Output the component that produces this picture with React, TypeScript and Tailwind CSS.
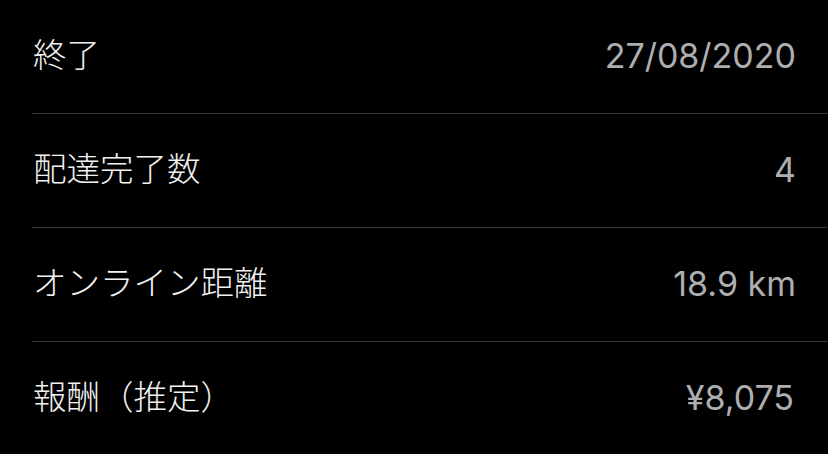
import React from "react";

const rows = [
  { label: "終了", value: "27/08/2020" },
  { label: "配達完了数", value: "4" },
  { label: "オンライン距離", value: "18.9 km" },
  { label: "報酬（推定）", value: "¥8,075" },
];

export default function App() {
  return (
    <div className="w-[828px] h-[454px] bg-black overflow-hidden">
      {rows.map((r, i) => (
        <div key={i} className="pl-[32px]">
          <div
            className={`h-[114px] flex items-center justify-between pr-[34px] ${
              i < rows.length - 1 ? "border-b border-[#38383a] mr-[-2px] pb-[2px]" : "pb-[2px]"
            }`}
          >
            <span className="text-[33.5px] font-light text-[#f2f2f2] pl-[1px] leading-none [font-family:Inter,'Noto_Sans_CJK_JP',sans-serif]">
              {r.label}
            </span>
            <span className="text-[34px] font-normal text-[#aeaeb0] leading-none [font-family:Inter,'Noto_Sans_CJK_JP',sans-serif]">
              {r.value}
            </span>
          </div>
        </div>
      ))}
    </div>
  );
}
